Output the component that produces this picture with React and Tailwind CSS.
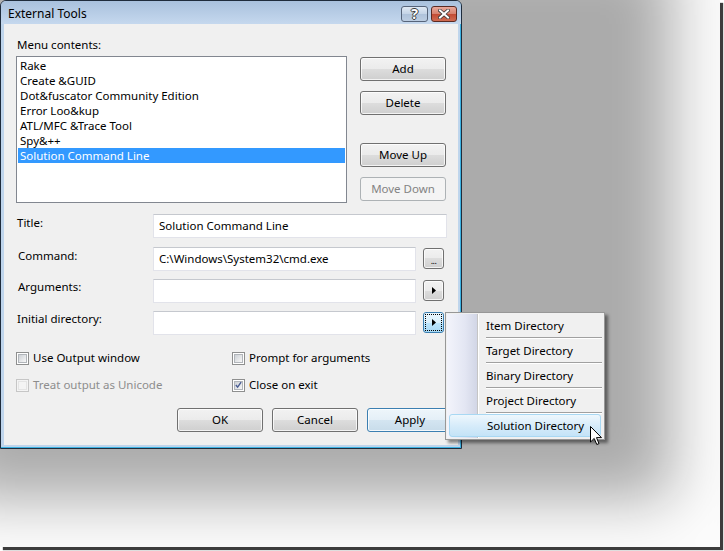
import React from 'react';

const btnFace = 'bg-[linear-gradient(#f2f2f2,#ebebeb_50%,#dddddd_50%,#cfcfcf)] shadow-[inset_0_0_0_1px_rgba(255,255,255,0.75)]';

function Btn({ children, disabled, def, className = '' }) {
  let look = `border-[#707070] ${btnFace}`;
  if (disabled) look = 'border-[#adb2b5] bg-[#f4f4f4] text-[#838383]';
  if (def) look = 'border-[#3c7fb1] bg-[linear-gradient(#eef6fb,#e4eff7_50%,#d4e5f1_50%,#c8dcea)] shadow-[inset_0_0_0_1px_rgba(255,255,255,0.8)]';
  return (
    <div className={`flex items-center justify-center rounded-[3px] border w-[86px] h-[24px] ${look} ${className}`}>
      {children}
    </div>
  );
}

function Arrow() {
  return (
    <svg width="4" height="7" viewBox="0 0 4 7">
      <polygon points="0,0 4,3.5 0,7" fill="#000" />
    </svg>
  );
}

function SmallBtn({ children, focused }) {
  const look = focused
    ? 'border-[#3c7fb1] bg-[linear-gradient(#eaf6fd,#d9f0fc_50%,#bee6fd_50%,#a7d9f5)]'
    : `border-[#707070] ${btnFace}`;
  return (
    <div className={`ml-[7px] mt-[1px] w-[21px] h-[21px] rounded-[3px] border p-[1px] ${look}`}>
      <div className={`w-full h-full flex items-center justify-center ${focused ? 'border border-dotted border-black' : ''}`}>
        {children}
      </div>
    </div>
  );
}

function Field({ value, className = 'w-[263px]' }) {
  return (
    <div className={`h-[24px] bg-white border border-[#e2e3ea] border-t-[#c5c8ce] pl-[5px] flex items-center ${className}`}>
      {value}
    </div>
  );
}

function Check({ label, checked, disabled }) {
  return (
    <div className="flex items-center h-[16px] gap-[4px]">
      <div className={`w-[13px] h-[13px] border p-[1px] ${disabled ? 'border-[#c6c6c6] bg-[#f4f4f4]' : 'border-[#8e8f8f] bg-white'}`}>
        <div className={`w-full h-full border flex items-center justify-center ${disabled ? 'border-[#e4e4e4] bg-[#f4f4f4]' : 'border-[#b1b5ba] bg-[linear-gradient(135deg,#cdd1d6,#f7f7f7)]'}`}>
          {checked && (
            <svg width="8" height="8" viewBox="0 0 8 8">
              <path d="M1,4 L3,6.5 L7,0.8" fill="none" stroke="#4a5d93" strokeWidth="1.6" />
            </svg>
          )}
        </div>
      </div>
      <span className={disabled ? 'text-[#8d8d8d]' : ''}>{label}</span>
    </div>
  );
}

const tools = ['Rake', 'Create &GUID', 'Dot&fuscator Community Edition', 'Error Loo&kup', 'ATL/MFC &Trace Tool', 'Spy&++', 'Solution Command Line'];
const dirs = ['Item Directory', 'Target Directory', 'Binary Directory', 'Project Directory', 'Solution Directory'];

export default function App() {
  return (
    <div className="w-[724px] h-[551px] bg-white font-['Noto_Sans',sans-serif] text-[11.5px] leading-[16px] text-black">
      <div className="relative w-[720px] h-[547px] overflow-hidden bg-[#ababab] shadow-[inset_-48px_-48px_60px_#fcfcfc,3px_3px_1px_#3c3c3c]">
        {/* Dialog window */}
        <div className="w-[462px] h-[449px] rounded-t-[6px] border border-[#1f2c3c] bg-[#bfd5ec] shadow-[inset_-1px_-1px_0_#3cb2e2] flex flex-col">
          {/* Title bar */}
          <div className="h-[23px] rounded-t-[5px] bg-[linear-gradient(#a9c1dd,#c5d8ee)] flex items-start">
            <span className="ml-[7px] mt-[5px] text-[12px]">External Tools</span>
            <div className="ml-auto mt-[5px] flex gap-[3px] mr-[4px]">
              <div className="w-[27px] h-[16px] rounded-[3px] border border-[#56647a] bg-[linear-gradient(#e0e9f4,#c3d3e6_50%,#aec2da_50%,#bccde2)] flex items-center justify-center">
                <span className="text-[14px] font-bold leading-none text-white [text-shadow:1px_0_0_#3a3a3a,-1px_0_0_#3a3a3a,0_1px_0_#3a3a3a,0_-1px_0_#3a3a3a]">?</span>
              </div>
              <div className="w-[26px] h-[16px] rounded-[3px] border border-[#5a2a22] bg-[linear-gradient(#e9a99b,#d6806d_50%,#c24a33_50%,#cf6b52)] flex items-center justify-center">
                <svg width="12" height="10" viewBox="0 0 12 10">
                  <path d="M2,1.5 L10,8.5 M10,1.5 L2,8.5" stroke="#3a3a3a" strokeWidth="3.6" strokeLinecap="square" />
                  <path d="M2,1.5 L10,8.5 M10,1.5 L2,8.5" stroke="#ffffff" strokeWidth="2" strokeLinecap="square" />
                </svg>
              </div>
            </div>
          </div>

          {/* Body */}
          <div className="flex-1 mx-[3px] mb-[3px] bg-[#f0f0f0] pl-[12px] pt-[13px] flex flex-col">
            <div className="ml-[1px]">Menu contents:</div>

            <div className="mt-[3px] flex">
              <div className="w-[331px] h-[147px] bg-white border border-[#828790] p-[1px]">
                {tools.map((t, i) => (
                  <div key={t} className={`h-[15px] leading-[15px] pl-[2px] ${i === tools.length - 1 ? 'bg-[#3399ff] text-white' : ''}`}>
                    {t}
                  </div>
                ))}
              </div>
              <div className="ml-[13px] mt-[1px] flex flex-col">
                <Btn className="w-[85px]">Add</Btn>
                <Btn className="w-[85px] mt-[10px]">Delete</Btn>
                <Btn className="w-[85px] mt-[28px]">Move Up</Btn>
                <Btn className="w-[85px] mt-[10px]" disabled>Move Down</Btn>
              </div>
            </div>

            <div className="mt-[11px] flex items-start">
              <span className="w-[137px] pl-[1px] mt-[1px]">Title:</span>
              <Field value="Solution Command Line" className="w-[294px]" />
            </div>
            <div className="mt-[9px] flex items-start">
              <span className="w-[137px] pl-[2px] mt-[1px]">Command:</span>
              <Field value="C:\Windows\System32\cmd.exe" />
              <SmallBtn>
                <span className="text-[9px] leading-none mt-[4px] tracking-[-0.5px]">...</span>
              </SmallBtn>
            </div>
            <div className="mt-[8px] flex items-start">
              <span className="w-[137px] pl-[2px]">Arguments:</span>
              <Field value="" />
              <SmallBtn>
                <Arrow />
              </SmallBtn>
            </div>
            <div className="mt-[8px] flex items-start">
              <span className="w-[137px] pl-[1px]">Initial directory:</span>
              <Field value="" />
              <SmallBtn focused>
                <Arrow />
              </SmallBtn>
            </div>

            <div className="mt-[15px] flex">
              <div className="w-[216px]">
                <Check label="Use Output window" />
              </div>
              <Check label="Prompt for arguments" />
            </div>
            <div className="mt-[11px] flex">
              <div className="w-[216px]">
                <Check label="Treat output as Unicode" disabled />
              </div>
              <Check label="Close on exit" checked />
            </div>

            <div className="mt-[15px] ml-[161px] flex gap-[9px]">
              <Btn>OK</Btn>
              <Btn>Cancel</Btn>
              <Btn def className="w-[80px]">Apply</Btn>
            </div>
          </div>
        </div>

        {/* Popup menu */}
        <div className="absolute left-[445px] top-[312px] w-[160px] h-[128px] bg-[#f0f0f0] border border-[#979797] p-[1px] shadow-[3px_3px_3px_rgba(0,0,0,0.45)]">
          <div className="absolute left-[1px] top-[1px] bottom-[1px] w-[31px] bg-[linear-gradient(90deg,#f3f4fb,#e3e6f3_60%,#d2d6e6)] border-r border-r-[#c5c5c5] shadow-[1px_0_0_#ffffff]" />
          <div className="relative flex flex-col">
            {dirs.map((d, i) => (
              <React.Fragment key={d}>
                {i === dirs.length - 1 ? (
                  <div className="h-[23px] mx-[2px] rounded-[3px] border border-[#a8d8f3] bg-[linear-gradient(#eef7fd,#d7ecfa_50%,#c4e3f7)] flex items-center pl-[37px]">
                    {d}
                  </div>
                ) : (
                  <div className="h-[23px] flex items-center pl-[39px]">{d}</div>
                )}
                {i < dirs.length - 1 && <div className="h-[2px] ml-[39px] mr-[1px] border-t border-t-[#a0a0a0] border-b border-b-white" />}
              </React.Fragment>
            ))}
          </div>
        </div>

        {/* Mouse cursor */}
        <svg className="absolute left-[590px] top-[426px]" width="13" height="20" viewBox="0 0 13 20">
          <path d="M0.5,0.5 L0.5,16 L4.2,12.4 L6.8,18.5 L9,17.6 L6.5,11.6 L11.5,11.6 Z" fill="#ffffff" stroke="#000000" strokeWidth="1" strokeLinejoin="round" />
        </svg>
      </div>
    </div>
  );
}
